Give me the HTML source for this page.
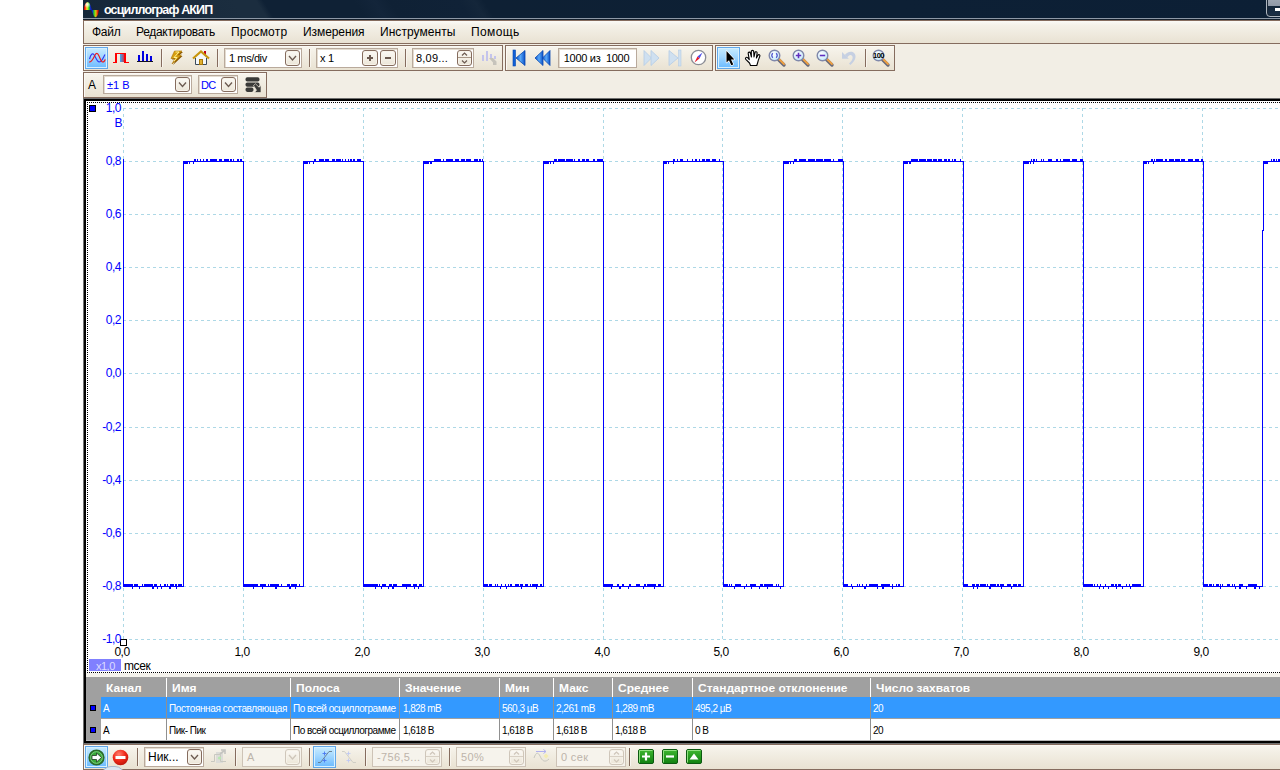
<!DOCTYPE html><html lang="ru"><head><meta charset="utf-8"><title>осциллограф АКИП</title><style>
*{box-sizing:border-box;margin:0;padding:0}
html,body{width:1280px;height:770px;overflow:hidden;background:#fff}
body{position:relative;font-family:"Liberation Sans","DejaVu Sans",sans-serif;font-size:11px;color:#000}
.a{position:absolute}
.tb{position:absolute;border:1px solid #856c5e;background:linear-gradient(#f8f5ee 0%,#f3efe5 30%,#e9e2d2 100%);box-shadow:inset 1px 1px 0 #fbf9f4}
.sep{position:absolute;width:1px;background:#856c5e;box-shadow:1px 0 0 #f8f5ee}
.fld{position:absolute;letter-spacing:-0.3px;background:#fff;border:1px solid #b9aa9c;box-shadow:inset 1px 1px 0 #e4dcd0;height:20px;line-height:18px;white-space:nowrap;overflow:hidden}
.fld.dis{background:#f6f3ec;border-color:#cdc3b6;color:#bdb4aa;box-shadow:none;font-size:11px !important;letter-spacing:0.35px}
.btn{position:absolute;border:1px solid #856c5e;border-radius:3px;background:linear-gradient(#fbf9f5,#ece6d8);box-shadow:inset 0 0 0 1px #f7f3ea}
.btn.dis{border-color:#cfc6ba}
.sel{position:absolute;border:1px solid #62a8ea;background:linear-gradient(#c8ecff 0%,#a2d7ff 45%,#6abaff 100%);box-shadow:inset 0 0 0 1px #d6f0ff}
.t{position:absolute;white-space:nowrap;line-height:1}
.yl{position:absolute;white-space:nowrap;line-height:1;font-size:12px;letter-spacing:-0.5px;color:#0000ff;text-align:right;width:40px}
.xl{position:absolute;white-space:nowrap;line-height:1;font-size:12px;letter-spacing:-0.5px;color:#000;text-align:center;width:40px}
.th{position:absolute;white-space:nowrap;line-height:1;font-size:10px;font-weight:bold;color:#fff;top:684px;transform:scaleX(1.2);transform-origin:0 0}
.td{position:absolute;white-space:nowrap;line-height:1;font-size:10px;letter-spacing:-0.45px}
svg{position:absolute;overflow:visible}
</style></head><body>
<div class="a" style="left:83px;top:20px;width:1197px;height:750px;background:#f2eee5"></div>
<div class="a" style="left:83px;top:0;width:1197px;height:20px;background:linear-gradient(58deg,#15273a 5px,#1b2d3f 138px,#1b2d3f 157px,#0f2135 163px,#0f2135 240px,#13253a 257px,#0f2135 270px,#102237 329px,#14263a 342px,#0e2034 350px,#0d2035 700px,#0c1f35 1025px)"></div>
<div class="a" style="left:83px;top:18px;width:1197px;height:1px;background:#8d98a6"></div>
<div class="a" style="left:83px;top:19px;width:1197px;height:1px;background:#16202c"></div>
<svg style="left:83px;top:0px" width="17" height="19" viewBox="0 0 17 19">
<defs><linearGradient id="rb" x1="0" x2="1" y1="0" y2="0"><stop offset="0" stop-color="#c00000"/><stop offset=".15" stop-color="#ff2010"/><stop offset=".38" stop-color="#fff020"/><stop offset=".62" stop-color="#20e020"/><stop offset=".78" stop-color="#1030c0"/><stop offset="1" stop-color="#0808a0"/></linearGradient>
<linearGradient id="rb2" x1="0" x2="1" y1="0" y2="0"><stop offset="0" stop-color="#0808b0"/><stop offset=".2" stop-color="#1030d0"/><stop offset=".35" stop-color="#20d020"/><stop offset=".6" stop-color="#e0c010"/><stop offset=".85" stop-color="#e01808"/><stop offset="1" stop-color="#900000"/></linearGradient>
<radialGradient id="wh" cx=".4" cy=".3" r=".45"><stop offset="0" stop-color="#fff" stop-opacity=".95"/><stop offset="1" stop-color="#fff" stop-opacity="0"/></radialGradient></defs>
<path d="M0.8 10 C1.5 0.5 6.5 0 7.8 6.5 L9.2 10 Z" fill="url(#rb)"/><path d="M0.8 10 C1.5 0.5 6.5 0 7.8 6.5 L9.2 10 Z" fill="url(#wh)"/><path d="M8.2 10 L15.9 10 C15.3 17.8 11.5 19.3 10 14 Z" fill="url(#rb2)"/></svg>
<div class="t" style="left:104px;top:4px;font-size:12.5px;font-weight:bold;color:#fff;letter-spacing:-0.85px">осциллограф АКИП</div>
<div class="a" style="left:1266px;top:-3px;width:30px;height:20px;border:1px solid #aeb6c0;border-radius:0 0 0 4px;background:linear-gradient(#a0a8b4 0%,#8f98a6 45%,#14263a 46%,#1c3048 100%);box-shadow:inset 0 0 0 1px #1a2838"></div>
<div class="a" style="left:1275px;top:8px;width:8px;height:3px;background:#fff"></div>
<div class="a" style="left:83px;top:20px;width:1200px;height:24px;border:1px solid #856c5e;background:linear-gradient(#fbfaf6 0%,#f4f1e8 20%,#e9e2d3 100%)"></div>
<div class="t mn" style="left:92px;top:26px;font-size:12px;letter-spacing:-0.28px">Файл</div>
<div class="t mn" style="left:136px;top:26px;font-size:12px;letter-spacing:-0.30px">Редактировать</div>
<div class="t mn" style="left:231px;top:26px;font-size:12px;letter-spacing:0.18px">Просмотр</div>
<div class="t mn" style="left:303px;top:26px;font-size:12px;letter-spacing:-0.08px">Измерения</div>
<div class="t mn" style="left:380px;top:26px;font-size:12px;letter-spacing:0.05px">Инструменты</div>
<div class="t mn" style="left:471px;top:26px;font-size:12px;letter-spacing:0.40px">Помощь</div>
<div class="tb" style="left:83px;top:45px;width:420px;height:26px"></div>
<div class="tb" style="left:505px;top:45px;width:208px;height:26px"></div>
<div class="tb" style="left:715px;top:45px;width:180px;height:26px"></div>
<div class="tb" style="left:83px;top:72px;width:184px;height:26px"></div>
<div class="sel" style="left:85px;top:47px;width:23px;height:22px"></div>
<svg style="left:88px;top:50px" width="18" height="16" viewBox="0 0 18 16"><path d="M1.5 9 C3 3.5 5 2.5 6.5 5.5 C8.5 9.5 10 13 12.5 11.5 C14.5 10.5 15.5 7 17 4.5" fill="none" stroke="#3038f0" stroke-width="1.15"/><path d="M1 12 C3.5 12.5 5 9 6.5 6 C8 2.5 9.5 2.5 11 6 C12.5 9.5 14 13.5 16 11.5 C16.7 10.8 17 10 17.2 9.3" fill="none" stroke="#f01818" stroke-width="1.15"/></svg>
<svg style="left:112px;top:50px" width="18" height="16" viewBox="0 0 18 16" shape-rendering="crispEdges"><defs><linearGradient id="pg" x1="0" x2="1"><stop offset="0" stop-color="#30b0f8"/><stop offset="1" stop-color="#e02030"/></linearGradient></defs><rect x="8" y="4" width="5" height="8" fill="url(#pg)"/><path d="M1 12.5 H4 V3.5 H13 V12.5 H17" fill="none" stroke="#ff0000" stroke-width="1.6"/></svg>
<svg style="left:136px;top:50px" width="18" height="16" viewBox="0 0 18 16" shape-rendering="crispEdges"><rect x="2" y="5" width="2" height="7" fill="#0000e0"/><rect x="6" y="1" width="2" height="11" fill="#0000e0"/><rect x="10" y="4" width="2" height="8" fill="#0000e0"/><rect x="14" y="6" width="2" height="6" fill="#0000e0"/><rect x="1" y="11" width="16" height="1" fill="#101020"/></svg>
<div class="sep" style="left:161px;top:49px;height:18px"></div>
<svg style="left:169px;top:50px" width="16" height="16" viewBox="0 0 16 16"><path d="M6.5 2 L14 2 L9.5 6 L13.5 6 L4 15 L7 9.5 L3 9.5 Z" fill="#8a5800"/><path d="M5.5 1 L13 1 L8.5 5 L12.5 5 L3 14 L6 8.5 L2 8.5 Z" fill="#d8a010" stroke="#a87000" stroke-width=".6"/><path d="M6.5 2 L10 2 L5 7.5 L8 7.5 L5 11" fill="none" stroke="#fff090" stroke-width="1"/></svg>
<svg style="left:192px;top:50px" width="18" height="16" viewBox="0 0 18 16"><rect x="12" y="1" width="2" height="4" fill="#c00018"/><path d="M3.5 8 L9 3 L14.5 8 L14.5 14.5 L3.5 14.5 Z" fill="#f4f8fa"/><path d="M3.5 8 V14.5 H14.5 V8" fill="none" stroke="#3a4a5c" stroke-width="1"/><path d="M1 8.5 L9 1.5 L17 8.5" fill="none" stroke="#c8960c" stroke-width="2.2"/><rect x="7.5" y="9.5" width="3" height="5" fill="#e0b030" stroke="#a87808" stroke-width="1"/></svg>
<div class="sep" style="left:217px;top:49px;height:18px"></div>
<div class="fld" style="left:224px;top:48px;width:78px;padding-left:4px;letter-spacing:-0.4px">1 ms/div</div>
<div class="btn" style="left:285px;top:50px;width:15px;height:16px"></div>
<svg style="left:285px;top:50px" width="15" height="16" viewBox="0 0 15 16"><path d="M4 6.0 L7.500 10.0 L11 6.0" fill="none" stroke="#6b5a50" stroke-width="1.3"/></svg>
<div class="sep" style="left:309px;top:49px;height:18px"></div>
<div class="fld" style="left:316px;top:48px;width:82px;padding-left:3px">x 1</div>
<div class="btn" style="left:362px;top:50px;width:16px;height:16px"></div>
<div class="btn" style="left:380px;top:50px;width:16px;height:16px"></div>
<svg style="left:362px;top:50px" width="16" height="16" shape-rendering="crispEdges"><rect x="5" y="7" width="6" height="2" fill="#6b5a50"/><rect x="7" y="5" width="2" height="6" fill="#6b5a50"/></svg>
<svg style="left:380px;top:50px" width="16" height="16" shape-rendering="crispEdges"><rect x="5" y="7" width="6" height="2" fill="#6b5a50"/></svg>
<div class="sep" style="left:405px;top:49px;height:18px"></div>
<div class="fld" style="left:412px;top:48px;width:62px;padding-left:3px;letter-spacing:0.2px">8,09...</div>
<div class="btn" style="left:457px;top:50px;width:15px;height:16px"></div>
<div class="a" style="left:458px;top:57px;width:13px;height:1px;background:#a89888"></div>
<svg style="left:457px;top:50px" width="15" height="16" viewBox="0 0 15 16"><path d="M5 5.500 L7.500 3 L10 5.500" fill="none" stroke="#6b5a50" stroke-width="1.2"/><path d="M5 10.500 L7.500 13 L10 10.500" fill="none" stroke="#6b5a50" stroke-width="1.2"/></svg>
<svg style="left:481px;top:50px" width="17" height="16" viewBox="0 0 17 16"><rect x="1" y="5" width="2" height="6" fill="#c4c4ec"/><rect x="5" y="1" width="2" height="10" fill="#c4c4ec"/><rect x="9" y="4" width="2" height="4" fill="#c4c4ec"/><rect x="13" y="6" width="2" height="3" fill="#c4c4ec"/><path d="M8 8 L12 8 L15.500 11.500 L15.500 15 L12 15 L12 12.500 Z" fill="#c6c3bb"/></svg>
<svg style="left:512px;top:49px" width="14" height="18" viewBox="0 0 14 18"><defs><linearGradient id="bg1" x1="0" x2="1"><stop offset="0" stop-color="#0a50c8"/><stop offset=".5" stop-color="#58a8f8"/><stop offset="1" stop-color="#0a50c8"/></linearGradient></defs><rect x="1" y="1" width="2.500" height="16" fill="#1060d8" stroke="#0848b0" stroke-width=".6"/><path d="M13 1.500 L13 16.500 L4 9 Z" fill="url(#bg1)" stroke="#0848b0" stroke-width=".8"/></svg>
<svg style="left:534px;top:49px" width="17" height="18" viewBox="0 0 17 18"><defs><linearGradient id="bg2" x1="0" x2="1"><stop offset="0" stop-color="#0a50c8"/><stop offset=".5" stop-color="#58a8f8"/><stop offset="1" stop-color="#0a50c8"/></linearGradient></defs><path d="M9 1.500 L9 16.500 L1 9 Z" fill="url(#bg2)" stroke="#0848b0" stroke-width=".8"/><path d="M16 1.500 L16 16.500 L8.500 9 Z" fill="url(#bg2)" stroke="#0848b0" stroke-width=".8"/></svg>
<div class="fld" style="left:558px;top:48px;width:79px;padding-right:2px;text-align:center">1000 из&nbsp; 1000</div>
<svg style="left:643px;top:49px" width="17" height="18" viewBox="0 0 17 18"><path d="M1 1.500 L1 16.500 L8.500 9 Z" fill="#cfe0f0" stroke="#b4cce4" stroke-width=".8"/><path d="M8 1.500 L8 16.500 L16 9 Z" fill="#cfe0f0" stroke="#b4cce4" stroke-width=".8"/></svg>
<svg style="left:668px;top:49px" width="14" height="18" viewBox="0 0 14 18"><path d="M1 1.500 L1 16.500 L10 9 Z" fill="#cfe0f0" stroke="#b4cce4" stroke-width=".8"/><rect x="10.500" y="1" width="2.500" height="16" fill="#cfe0f0" stroke="#b4cce4" stroke-width=".6"/></svg>
<svg style="left:690px;top:49px" width="17" height="17" viewBox="0 0 17 17"><circle cx="8.500" cy="8.500" r="7.200" fill="#fff" stroke="#8a8c94" stroke-width="1.300"/><path d="M12.500 3.500 L9.500 9.500 L7.500 7.500 Z" fill="#5050e8"/><path d="M4.500 13.500 L7.500 7.500 L9.500 9.500 Z" fill="#e81828"/></svg>
<svg width="0" height="0" style="left:0;top:0"><defs><radialGradient id="lens" cx=".4" cy=".35" r=".7"><stop offset="0" stop-color="#ffffff"/><stop offset="1" stop-color="#bfe8fb"/></radialGradient></defs></svg>
<div class="sel" style="left:717px;top:47px;width:23px;height:22px"></div>
<svg style="left:722px;top:49px" width="14" height="18" viewBox="0 0 14 18"><path d="M4.5 2 L4.5 13.5 L7 11.2 L9.3 16.3 L11.3 15.4 L9 10.6 L12.4 10.6 Z" fill="#000" stroke="#fff" stroke-width="1.4" paint-order="stroke" stroke-linejoin="round"/></svg>
<svg style="left:744px;top:49px" width="18" height="18" viewBox="0 0 18 18"><path d="M6.5 16.5 L5.5 14 L1.8 10.3 C0.8 9 2.3 7.6 3.6 8.7 L5.3 10.6 L4.2 4.6 C3.9 3 6 2.5 6.4 4.1 L7.4 8 L7.3 2.6 C7.3 1 9.6 1 9.7 2.6 L10 8 L11 3.6 C11.4 2.1 13.4 2.6 13.1 4.2 L12.4 9 L13.9 6.3 C14.7 5 16.4 5.9 15.8 7.3 L14.2 11.6 C13.8 13.5 13.3 14.8 12.8 16.5 Z" fill="#fff" stroke="#000" stroke-width="1.1" stroke-linejoin="round"/></svg>
<svg style="left:768px;top:49px" width="18" height="18" viewBox="0 0 18 18"><path d="M9.500 9.500 L16 16" stroke="#6a6a78" stroke-width="3.400" stroke-linecap="round"/><path d="M10 9 L16 15" stroke="#f0a040" stroke-width="1.800" stroke-linecap="round"/><circle cx="6.500" cy="6.500" r="5.300" fill="url(#lens)" stroke="#8088aa" stroke-width="1.400"/><path d="M4.800 4.200 C3.600 5.500 3.600 7.500 4.800 8.800 M8.200 4.200 C9.400 5.500 9.400 7.500 8.200 8.800" fill="none" stroke="#5058d0" stroke-width="1.200"/></svg>
<svg style="left:792px;top:49px" width="18" height="18" viewBox="0 0 18 18"><path d="M9.500 9.500 L16 16" stroke="#6a6a78" stroke-width="3.400" stroke-linecap="round"/><path d="M10 9 L16 15" stroke="#f0a040" stroke-width="1.800" stroke-linecap="round"/><circle cx="6.500" cy="6.500" r="5.300" fill="url(#lens)" stroke="#8088aa" stroke-width="1.400"/><path d="M3.800 6.500 H9.200 M6.500 3.800 V9.200" stroke="#6030c0" stroke-width="1.600"/></svg>
<svg style="left:816px;top:49px" width="18" height="18" viewBox="0 0 18 18"><path d="M9.500 9.500 L16 16" stroke="#6a6a78" stroke-width="3.400" stroke-linecap="round"/><path d="M10 9 L16 15" stroke="#f0a040" stroke-width="1.800" stroke-linecap="round"/><circle cx="6.500" cy="6.500" r="5.300" fill="url(#lens)" stroke="#8088aa" stroke-width="1.400"/><path d="M3.800 6.500 H9.200" stroke="#6030c0" stroke-width="1.600"/></svg>
<svg style="left:841px;top:49px" width="17" height="18" viewBox="0 0 17 18"><path d="M1 3 L1 9.8 L7.8 9.8 Z" fill="#c6d0e2"/><path d="M3.8 6 C6 3 10.5 1.5 13.3 4.3 C16.3 7.5 13.5 13 9.3 16 L8 14.6 C11 12 12.6 8.8 11 6.8 C9.6 5.2 7.6 6.2 6.2 8.4 Z" fill="#c6d0e2"/></svg>
<div class="sep" style="left:865px;top:49px;height:18px"></div>
<svg style="left:872px;top:49px" width="18" height="18" viewBox="0 0 18 18"><path d="M9.500 9.500 L16 16" stroke="#6a6a78" stroke-width="3.400" stroke-linecap="round"/><path d="M10 9 L16 15" stroke="#f0a040" stroke-width="1.800" stroke-linecap="round"/><circle cx="6.500" cy="6.500" r="5.300" fill="url(#lens)" stroke="#8088aa" stroke-width="1.400"/><text x="6.500" y="8.800" font-size="7.500" font-weight="bold" text-anchor="middle" fill="#000" font-family="Liberation Sans,sans-serif" letter-spacing="-0.5">100</text></svg>
<div class="t" style="left:88px;top:79px;font-size:12px">A</div>
<div class="fld" style="left:103px;top:75px;width:89px;height:19px;line-height:18px;padding-left:3px;color:#0000ff;font-size:11px;letter-spacing:0">±1 В</div>
<div class="btn" style="left:175px;top:77px;width:15px;height:15px"></div>
<svg style="left:175px;top:77px" width="15" height="16" viewBox="0 0 15 16"><path d="M4 5.5 L7.500 9.5 L11 5.5" fill="none" stroke="#6b5a50" stroke-width="1.3"/></svg>
<div class="fld" style="left:198px;top:75px;width:40px;height:19px;line-height:18px;padding-left:2px;color:#0000ff;font-size:11px;letter-spacing:-0.8px">DC</div>
<div class="btn" style="left:221px;top:77px;width:15px;height:15px"></div>
<svg style="left:221px;top:77px" width="15" height="16" viewBox="0 0 15 16"><path d="M4 5.5 L7.500 9.5 L11 5.5" fill="none" stroke="#6b5a50" stroke-width="1.3"/></svg>
<svg style="left:245px;top:77px" width="17" height="16" viewBox="0 0 17 16"><rect x="0.5" y="0.2" width="14" height="4.300" rx="1.800" fill="#3a3a38"/><rect x="0.5" y="5.400" width="14" height="4.300" rx="1.800" fill="#3a3a38"/><rect x="0.5" y="10.600" width="8" height="4.300" rx="1.800" fill="#3a3a38"/><path d="M8.500 8.500 L10.500 6.800 L14 10.200 L16 8.500 L16 15.500 L9.500 15.500 L11.500 13.200 Z" fill="#3a3a38" stroke="#ece6d8" stroke-width=".7"/></svg>
<div class="a" style="left:83px;top:98px;width:1200px;height:646px;background:#707070"></div>
<div class="a" style="left:84px;top:99px;width:1200px;height:644px;background:#000"></div>
<div class="a" style="left:86px;top:101px;width:1200px;height:572px;background:#fff"></div>
<div class="a" style="left:86px;top:673px;width:1200px;height:4px;background:#f4f2ec"></div>
<div class="a" style="left:86px;top:677px;width:1200px;height:64px;background:#a0a0a0"></div>
<div class="a" style="left:86px;top:740px;width:1200px;height:1px;background:#b8b8b8"></div>
<svg style="left:0;top:0" width="1280" height="770" viewBox="0 0 1280 770" shape-rendering="crispEdges"><path d="M87 102.500 H1280" stroke="#000" stroke-width="1" stroke-dasharray="1 1" fill="none"/><path d="M87 672.500 H1280" stroke="#000" stroke-width="1" stroke-dasharray="1 1" fill="none"/><path d="M87.500 102 V673" stroke="#000" stroke-width="1" stroke-dasharray="1 1" fill="none"/><path d="M123 108.5 H1280" stroke="#add8e6" stroke-width="1" stroke-dasharray="3 3" fill="none"/><path d="M123 161.5 H1280" stroke="#add8e6" stroke-width="1" stroke-dasharray="3 3" fill="none"/><path d="M123 214.5 H1280" stroke="#add8e6" stroke-width="1" stroke-dasharray="3 3" fill="none"/><path d="M123 267.5 H1280" stroke="#add8e6" stroke-width="1" stroke-dasharray="3 3" fill="none"/><path d="M123 320.5 H1280" stroke="#add8e6" stroke-width="1" stroke-dasharray="3 3" fill="none"/><path d="M123 373.5 H1280" stroke="#add8e6" stroke-width="1" stroke-dasharray="3 3" fill="none"/><path d="M123 427.5 H1280" stroke="#add8e6" stroke-width="1" stroke-dasharray="3 3" fill="none"/><path d="M123 480.5 H1280" stroke="#add8e6" stroke-width="1" stroke-dasharray="3 3" fill="none"/><path d="M123 533.5 H1280" stroke="#add8e6" stroke-width="1" stroke-dasharray="3 3" fill="none"/><path d="M123 586.5 H1280" stroke="#add8e6" stroke-width="1" stroke-dasharray="3 3" fill="none"/><path d="M123 639.5 H1280" stroke="#add8e6" stroke-width="1" stroke-dasharray="3 3" fill="none"/><path d="M123.5 108 V640" stroke="#add8e6" stroke-width="1" stroke-dasharray="3 3" fill="none"/><path d="M243.5 108 V640" stroke="#add8e6" stroke-width="1" stroke-dasharray="3 3" fill="none"/><path d="M363.5 108 V640" stroke="#add8e6" stroke-width="1" stroke-dasharray="3 3" fill="none"/><path d="M483.5 108 V640" stroke="#add8e6" stroke-width="1" stroke-dasharray="3 3" fill="none"/><path d="M603.5 108 V640" stroke="#add8e6" stroke-width="1" stroke-dasharray="3 3" fill="none"/><path d="M722.5 108 V640" stroke="#add8e6" stroke-width="1" stroke-dasharray="3 3" fill="none"/><path d="M842.5 108 V640" stroke="#add8e6" stroke-width="1" stroke-dasharray="3 3" fill="none"/><path d="M962.5 108 V640" stroke="#add8e6" stroke-width="1" stroke-dasharray="3 3" fill="none"/><path d="M1082.5 108 V640" stroke="#add8e6" stroke-width="1" stroke-dasharray="3 3" fill="none"/><path d="M1202.5 108 V640" stroke="#add8e6" stroke-width="1" stroke-dasharray="3 3" fill="none"/><path d="M123 161h1v426h-1zM183 161h1v426h-1zM243 161h1v426h-1zM303 161h1v426h-1zM363 161h1v426h-1zM423 161h1v426h-1zM483 161h1v426h-1zM543 161h1v426h-1zM603 161h1v426h-1zM663 161h1v426h-1zM723 161h1v426h-1zM783 161h1v426h-1zM843 161h1v426h-1zM903 161h1v426h-1zM963 161h1v426h-1zM1023 161h1v426h-1zM1083 161h1v426h-1zM1143 161h1v426h-1zM1203 161h1v426h-1zM1263 161h1v70h-1zM1262 230h1v357h-1zM123 586h61v1h-61zM124 584h9v2h-9zM134 584h4v2h-4zM142 584h1v2h-1zM144 584h9v2h-9zM154 584h3v2h-3zM160 584h1v2h-1zM164 584h2v2h-2zM167 584h1v2h-1zM170 584h4v2h-4zM175 584h2v2h-2zM178 584h4v2h-4zM132 587h1v2h-1zM139 587h1v2h-1zM152 587h2v2h-2zM157 587h1v2h-1zM161 587h1v2h-1zM169 587h2v2h-2zM176 587h1v2h-1zM183 161h61v1h-61zM184 162h4v2h-4zM189 162h1v2h-1zM193 162h1v2h-1zM194 159h2v2h-2zM197 159h1v2h-1zM200 159h1v2h-1zM203 159h1v2h-1zM206 159h2v2h-2zM210 159h7v2h-7zM219 159h3v2h-3zM224 159h5v2h-5zM230 159h2v2h-2zM233 159h1v2h-1zM237 159h2v2h-2zM240 159h2v2h-2zM243 586h61v1h-61zM244 584h14v2h-14zM260 584h6v2h-6zM268 584h1v2h-1zM270 584h9v2h-9zM281 584h1v2h-1zM287 584h3v2h-3zM291 584h6v2h-6zM299 584h1v2h-1zM253 587h1v2h-1zM262 587h1v2h-1zM275 587h2v2h-2zM289 587h2v2h-2zM295 587h1v2h-1zM303 161h61v1h-61zM304 162h4v2h-4zM309 162h1v2h-1zM313 162h1v2h-1zM314 159h2v2h-2zM319 159h5v2h-5zM325 159h4v2h-4zM332 159h3v2h-3zM336 159h5v2h-5zM342 159h1v2h-1zM345 159h1v2h-1zM348 159h1v2h-1zM350 159h2v2h-2zM353 159h2v2h-2zM357 159h4v2h-4zM363 586h61v1h-61zM364 584h14v2h-14zM379 584h1v2h-1zM382 584h4v2h-4zM389 584h3v2h-3zM393 584h4v2h-4zM402 584h9v2h-9zM413 584h4v2h-4zM419 584h3v2h-3zM375 587h1v2h-1zM381 587h1v2h-1zM388 587h1v2h-1zM392 587h2v2h-2zM406 587h1v2h-1zM414 587h1v2h-1zM418 587h1v2h-1zM423 161h61v1h-61zM424 162h5v2h-5zM430 162h2v2h-2zM434 159h7v2h-7zM443 159h1v2h-1zM446 159h7v2h-7zM455 159h4v2h-4zM461 159h4v2h-4zM466 159h5v2h-5zM474 159h4v2h-4zM479 159h2v2h-2zM482 159h1v2h-1zM483 586h61v1h-61zM484 584h4v2h-4zM489 584h3v2h-3zM495 584h1v2h-1zM497 584h1v2h-1zM501 584h1v2h-1zM505 584h1v2h-1zM508 584h1v2h-1zM510 584h2v2h-2zM515 584h4v2h-4zM520 584h3v2h-3zM525 584h3v2h-3zM530 584h1v2h-1zM532 584h6v2h-6zM540 584h2v2h-2zM500 587h1v2h-1zM506 587h1v2h-1zM521 587h1v2h-1zM536 587h1v2h-1zM543 161h61v1h-61zM544 162h5v2h-5zM550 162h1v2h-1zM553 162h1v2h-1zM554 159h3v2h-3zM558 159h7v2h-7zM566 159h7v2h-7zM574 159h1v2h-1zM578 159h2v2h-2zM582 159h3v2h-3zM586 159h3v2h-3zM593 159h2v2h-2zM597 159h6v2h-6zM603 586h61v1h-61zM604 584h9v2h-9zM617 584h2v2h-2zM622 584h2v2h-2zM629 584h2v2h-2zM636 584h4v2h-4zM644 584h2v2h-2zM647 584h9v2h-9zM658 584h3v2h-3zM611 587h1v2h-1zM619 587h2v2h-2zM628 587h1v2h-1zM643 587h1v2h-1zM654 587h1v2h-1zM663 161h61v1h-61zM664 162h3v2h-3zM668 162h1v2h-1zM673 162h1v2h-1zM673 159h2v2h-2zM677 159h1v2h-1zM680 159h3v2h-3zM687 159h1v2h-1zM692 159h1v2h-1zM695 159h2v2h-2zM699 159h1v2h-1zM702 159h3v2h-3zM706 159h4v2h-4zM712 159h4v2h-4zM719 159h1v2h-1zM723 586h61v1h-61zM724 584h4v2h-4zM729 584h1v2h-1zM731 584h1v2h-1zM735 584h6v2h-6zM746 584h1v2h-1zM750 584h6v2h-6zM760 584h3v2h-3zM764 584h9v2h-9zM776 584h1v2h-1zM778 584h1v2h-1zM734 587h1v2h-1zM744 587h1v2h-1zM751 587h1v2h-1zM759 587h1v2h-1zM767 587h1v2h-1zM780 587h1v2h-1zM783 161h61v1h-61zM784 162h5v2h-5zM790 162h1v2h-1zM793 162h1v2h-1zM794 159h3v2h-3zM799 159h7v2h-7zM808 159h7v2h-7zM816 159h7v2h-7zM824 159h7v2h-7zM833 159h1v2h-1zM838 159h5v2h-5zM843 586h61v1h-61zM844 584h4v2h-4zM851 584h1v2h-1zM857 584h1v2h-1zM859 584h1v2h-1zM862 584h1v2h-1zM866 584h1v2h-1zM869 584h9v2h-9zM881 584h9v2h-9zM892 584h1v2h-1zM896 584h1v2h-1zM898 584h2v2h-2zM852 587h1v2h-1zM864 587h2v2h-2zM877 587h1v2h-1zM882 587h2v2h-2zM892 587h1v2h-1zM903 161h61v1h-61zM904 162h4v2h-4zM909 162h2v2h-2zM911 159h7v2h-7zM919 159h7v2h-7zM927 159h5v2h-5zM933 159h4v2h-4zM938 159h4v2h-4zM944 159h3v2h-3zM948 159h2v2h-2zM952 159h1v2h-1zM954 159h2v2h-2zM960 159h1v2h-1zM963 586h61v1h-61zM964 584h4v2h-4zM972 584h3v2h-3zM976 584h3v2h-3zM980 584h6v2h-6zM987 584h1v2h-1zM990 584h6v2h-6zM997 584h2v2h-2zM1000 584h4v2h-4zM1007 584h4v2h-4zM1013 584h4v2h-4zM1018 584h3v2h-3zM973 587h1v2h-1zM977 587h1v2h-1zM989 587h2v2h-2zM1001 587h1v2h-1zM1011 587h1v2h-1zM1023 161h61v1h-61zM1024 162h5v2h-5zM1030 162h1v2h-1zM1033 162h1v2h-1zM1031 159h1v2h-1zM1033 159h2v2h-2zM1036 159h1v2h-1zM1041 159h1v2h-1zM1043 159h1v2h-1zM1048 159h4v2h-4zM1056 159h2v2h-2zM1060 159h1v2h-1zM1063 159h7v2h-7zM1072 159h5v2h-5zM1080 159h3v2h-3zM1083 586h61v1h-61zM1084 584h9v2h-9zM1094 584h1v2h-1zM1097 584h1v2h-1zM1100 584h1v2h-1zM1105 584h1v2h-1zM1111 584h3v2h-3zM1115 584h2v2h-2zM1118 584h3v2h-3zM1126 584h1v2h-1zM1129 584h1v2h-1zM1132 584h9v2h-9zM1099 587h1v2h-1zM1103 587h1v2h-1zM1108 587h1v2h-1zM1116 587h1v2h-1zM1122 587h1v2h-1zM1130 587h1v2h-1zM1143 161h61v1h-61zM1144 162h3v2h-3zM1148 162h1v2h-1zM1153 162h1v2h-1zM1151 159h2v2h-2zM1154 159h1v2h-1zM1156 159h7v2h-7zM1165 159h2v2h-2zM1169 159h5v2h-5zM1175 159h5v2h-5zM1181 159h4v2h-4zM1188 159h5v2h-5zM1195 159h4v2h-4zM1201 159h2v2h-2zM1203 586h60v1h-60zM1204 584h4v2h-4zM1209 584h3v2h-3zM1213 584h1v2h-1zM1216 584h3v2h-3zM1220 584h1v2h-1zM1222 584h1v2h-1zM1227 584h3v2h-3zM1232 584h1v2h-1zM1234 584h1v2h-1zM1239 584h4v2h-4zM1248 584h9v2h-9zM1220 587h1v2h-1zM1235 587h1v2h-1zM1239 587h2v2h-2zM1246 587h1v2h-1zM1254 587h2v2h-2zM1259 587h1v2h-1zM1263 161h18v1h-18zM1264 162h4v2h-4zM1271 159h1v2h-1zM1273 159h2v2h-2zM1276 159h1v2h-1zM1278 159h2v2h-2zM123 159h1v2h-1z" fill="#0000ff"/><rect x="89.500" y="105.500" width="6" height="6" fill="#0000ff" stroke="#000" stroke-width="1"/><rect x="120.500" y="639.500" width="6" height="6" fill="#fff" stroke="#000" stroke-width="1"/></svg>
<div class="yl" style="left:81px;top:102px">1,0</div>
<div class="yl" style="left:81px;top:155px">0,8</div>
<div class="yl" style="left:81px;top:208px">0,6</div>
<div class="yl" style="left:81px;top:261px">0,4</div>
<div class="yl" style="left:81px;top:314px">0,2</div>
<div class="yl" style="left:81px;top:367px">0,0</div>
<div class="yl" style="left:81px;top:421px">-0,2</div>
<div class="yl" style="left:81px;top:474px">-0,4</div>
<div class="yl" style="left:81px;top:527px">-0,6</div>
<div class="yl" style="left:81px;top:580px">-0,8</div>
<div class="yl" style="left:81px;top:633px">-1,0</div>
<div class="yl" style="left:82px;top:117px">В</div>
<div class="xl" style="left:102px;top:646px">0,0</div>
<div class="xl" style="left:222px;top:646px">1,0</div>
<div class="xl" style="left:342px;top:646px">2,0</div>
<div class="xl" style="left:462px;top:646px">3,0</div>
<div class="xl" style="left:582px;top:646px">4,0</div>
<div class="xl" style="left:701px;top:646px">5,0</div>
<div class="xl" style="left:821px;top:646px">6,0</div>
<div class="xl" style="left:941px;top:646px">7,0</div>
<div class="xl" style="left:1061px;top:646px">8,0</div>
<div class="xl" style="left:1181px;top:646px">9,0</div>
<div class="a" style="left:89px;top:659px;width:32px;height:12px;background:#8080ff"></div>
<div class="t" style="left:96px;top:661px;font-size:11px;color:#dcdcff;letter-spacing:-0.5px">x1,0</div>
<div class="t" style="left:124px;top:660px;font-size:12px;letter-spacing:-0.4px">mсек</div>
<div class="a" style="left:101px;top:697px;width:1200px;height:21px;background:#3399ff"></div>
<div class="a" style="left:101px;top:719px;width:1200px;height:21px;background:#fff"></div>
<div class="a" style="left:166px;top:678px;width:1px;height:19px;background:#fff"></div>
<div class="a" style="left:166px;top:697px;width:1px;height:43px;background:#909090"></div>
<div class="a" style="left:290px;top:678px;width:1px;height:19px;background:#fff"></div>
<div class="a" style="left:290px;top:697px;width:1px;height:43px;background:#909090"></div>
<div class="a" style="left:399px;top:678px;width:1px;height:19px;background:#fff"></div>
<div class="a" style="left:399px;top:697px;width:1px;height:43px;background:#909090"></div>
<div class="a" style="left:499px;top:678px;width:1px;height:19px;background:#fff"></div>
<div class="a" style="left:499px;top:697px;width:1px;height:43px;background:#909090"></div>
<div class="a" style="left:553px;top:678px;width:1px;height:19px;background:#fff"></div>
<div class="a" style="left:553px;top:697px;width:1px;height:43px;background:#909090"></div>
<div class="a" style="left:612px;top:678px;width:1px;height:19px;background:#fff"></div>
<div class="a" style="left:612px;top:697px;width:1px;height:43px;background:#909090"></div>
<div class="a" style="left:692px;top:678px;width:1px;height:19px;background:#fff"></div>
<div class="a" style="left:692px;top:697px;width:1px;height:43px;background:#909090"></div>
<div class="a" style="left:870px;top:678px;width:1px;height:19px;background:#fff"></div>
<div class="a" style="left:870px;top:697px;width:1px;height:43px;background:#909090"></div>
<div class="th" style="left:106px">Канал</div>
<div class="th" style="left:172px">Имя</div>
<div class="th" style="left:296px">Полоса</div>
<div class="th" style="left:405px">Значение</div>
<div class="th" style="left:505px">Мин</div>
<div class="th" style="left:559px">Макс</div>
<div class="th" style="left:618px">Среднее</div>
<div class="th" style="left:698px">Стандартное отклонение</div>
<div class="th" style="left:876px">Число захватов</div>
<div class="td" style="left:103px;top:704px;color:#fff;letter-spacing:-0.50px">A</div>
<div class="td" style="left:169px;top:704px;color:#fff;letter-spacing:-0.38px">Постоянная составляющая</div>
<div class="td" style="left:293px;top:704px;color:#fff;letter-spacing:-0.50px">По всей осциллограмме</div>
<div class="td" style="left:403px;top:704px;color:#fff;letter-spacing:-0.60px">1,828 mВ</div>
<div class="td" style="left:502px;top:704px;color:#fff;letter-spacing:-0.50px">560,3 µВ</div>
<div class="td" style="left:556px;top:704px;color:#fff;letter-spacing:-0.50px">2,261 mВ</div>
<div class="td" style="left:615px;top:704px;color:#fff;letter-spacing:-0.50px">1,289 mВ</div>
<div class="td" style="left:695px;top:704px;color:#fff;letter-spacing:-0.50px">495,2 µВ</div>
<div class="td" style="left:873px;top:704px;color:#fff;letter-spacing:-0.50px">20</div>
<div class="td" style="left:103px;top:726px;color:#000;letter-spacing:-0.50px">A</div>
<div class="td" style="left:169px;top:726px;color:#000;letter-spacing:-0.50px">Пик- Пик</div>
<div class="td" style="left:293px;top:726px;color:#000;letter-spacing:-0.50px">По всей осциллограмме</div>
<div class="td" style="left:403px;top:726px;color:#000;letter-spacing:-0.50px">1,618 В</div>
<div class="td" style="left:502px;top:726px;color:#000;letter-spacing:-0.50px">1,618 В</div>
<div class="td" style="left:556px;top:726px;color:#000;letter-spacing:-0.50px">1,618 В</div>
<div class="td" style="left:615px;top:726px;color:#000;letter-spacing:-0.50px">1,618 В</div>
<div class="td" style="left:695px;top:726px;color:#000;letter-spacing:-0.50px">0 В</div>
<div class="td" style="left:873px;top:726px;color:#000;letter-spacing:-0.50px">20</div>
<div class="a" style="left:90px;top:705px;width:6px;height:6px;background:#0000ff;border:1px solid #000"></div>
<div class="a" style="left:90px;top:727px;width:6px;height:6px;background:#0000ff;border:1px solid #000"></div>
<div class="tb" style="left:83px;top:744px;width:1200px;height:26px"></div>
<div class="sel" style="left:85px;top:746px;width:23px;height:22px"></div>
<svg style="left:88px;top:749px" width="17" height="17" viewBox="0 0 17 17"><circle cx="8.500" cy="8.500" r="7.300" fill="#38a838" stroke="#2a6a2a" stroke-width="1.600"/><circle cx="8.500" cy="8.500" r="5.800" fill="none" stroke="#8ad08a" stroke-width=".8"/><path d="M4 6.500 H8.500 V4 L13.500 8.500 L8.500 13 V10.500 H4 Z" fill="#fff" stroke="#203820" stroke-width=".8"/></svg>
<svg style="left:112px;top:749px" width="17" height="17" viewBox="0 0 17 17"><defs><radialGradient id="rg" cx=".4" cy=".3" r=".8"><stop offset="0" stop-color="#ff8070"/><stop offset=".5" stop-color="#f02818"/><stop offset="1" stop-color="#b01008"/></radialGradient></defs><circle cx="8.500" cy="8.500" r="7.800" fill="url(#rg)"/><rect x="3.500" y="7" width="10" height="3" fill="#fff"/></svg>
<div class="sep" style="left:137px;top:748px;height:18px"></div>
<div class="fld" style="left:144px;top:747px;width:60px;padding-left:3px;font-size:12px;letter-spacing:0">Ник...</div>
<div class="btn" style="left:187px;top:749px;width:15px;height:16px"></div>
<svg style="left:187px;top:749px" width="15" height="16" viewBox="0 0 15 16"><path d="M4 6.0 L7.500 10.0 L11 6.0" fill="none" stroke="#6b5a50" stroke-width="1.3"/></svg>
<svg style="left:210px;top:749px" width="18" height="17" viewBox="0 0 18 17"><rect x="6" y="3" width="7" height="11" fill="#dcdcd8"/><path d="M1 12.500 H4.500 V5.500 H10.500 V12.500 H16" fill="none" stroke="#c8c8c0" stroke-width="1"/><circle cx="9.500" cy="9" r="1.600" fill="#b8e8b0"/><path d="M10 5 L14.500 1.500 M11 1 H15 V5" stroke="#c4c4c0" stroke-width="1.600" fill="none"/></svg>
<div class="sep" style="left:235px;top:748px;height:18px"></div>
<div class="fld dis" style="left:242px;top:747px;width:60px;padding-left:4px;font-size:12px">A</div>
<div class="btn dis" style="left:285px;top:749px;width:15px;height:16px"></div>
<svg style="left:285px;top:749px" width="15" height="16" viewBox="0 0 15 16"><path d="M4 6.0 L7.500 10.0 L11 6.0" fill="none" stroke="#cfc6ba" stroke-width="1.3"/></svg>
<div class="sep" style="left:309px;top:748px;height:18px"></div>
<div class="sel" style="left:313px;top:746px;width:23px;height:22px"></div>
<svg style="left:317px;top:749px" width="16" height="16" viewBox="0 0 16 16"><path d="M1 13.500 H3.500 L12 2.500 H15" fill="none" stroke="#5c6c7c" stroke-width=".8"/><path d="M7.500 2.500 V6.500 M5.500 4.500 H9.500 M7.500 9.500 V13.500 M5.500 11.500 H9.500" stroke="#4a78f0" stroke-width=".9"/></svg>
<svg style="left:341px;top:749px" width="16" height="16" viewBox="0 0 16 16"><path d="M1 2.500 H3.500 L12 13.500 H15" fill="none" stroke="#c8c8c0" stroke-width=".8"/><path d="M7.500 2.500 V6.500 M5.500 4.500 H9.500 M7.500 9.500 V13.500 M5.500 11.500 H9.500" stroke="#c0c8f4" stroke-width=".9"/></svg>
<div class="sep" style="left:365px;top:748px;height:18px"></div>
<div class="fld dis" style="left:372px;top:747px;width:70px;padding-left:4px;font-size:12px">-756,5...</div>
<div class="btn dis" style="left:425px;top:749px;width:15px;height:16px"></div>
<div class="a" style="left:426px;top:756px;width:13px;height:1px;background:#d8d0c4"></div>
<svg style="left:425px;top:749px" width="15" height="16" viewBox="0 0 15 16"><path d="M5 5.500 L7.500 3 L10 5.500" fill="none" stroke="#cfc6ba" stroke-width="1.2"/><path d="M5 10.500 L7.500 13 L10 10.500" fill="none" stroke="#cfc6ba" stroke-width="1.2"/></svg>
<div class="sep" style="left:449px;top:748px;height:18px"></div>
<div class="fld dis" style="left:456px;top:747px;width:70px;padding-left:4px;font-size:12px">50%</div>
<div class="btn dis" style="left:509px;top:749px;width:15px;height:16px"></div>
<div class="a" style="left:510px;top:756px;width:13px;height:1px;background:#d8d0c4"></div>
<svg style="left:509px;top:749px" width="15" height="16" viewBox="0 0 15 16"><path d="M5 5.500 L7.500 3 L10 5.500" fill="none" stroke="#cfc6ba" stroke-width="1.2"/><path d="M5 10.500 L7.500 13 L10 10.500" fill="none" stroke="#cfc6ba" stroke-width="1.2"/></svg>
<svg style="left:533px;top:749px" width="17" height="16" viewBox="0 0 17 16"><path d="M1 9 C3 3 5 3 7 7 C9 12 12 14 16 10" fill="none" stroke="#c8c8c0" stroke-width="1"/><path d="M3 2.500 H13 M10.500 0.500 L13 2.500 L10.500 4.500" fill="none" stroke="#b0b0f0" stroke-width="1"/><path d="M13 4.500 L15.500 7 L13 9.500 L10.500 7 Z" fill="#f4ecb0"/></svg>
<div class="fld dis" style="left:556px;top:747px;width:70px;padding-left:4px;font-size:12px">0 сек</div>
<div class="btn dis" style="left:609px;top:749px;width:15px;height:16px"></div>
<div class="a" style="left:610px;top:756px;width:13px;height:1px;background:#d8d0c4"></div>
<svg style="left:609px;top:749px" width="15" height="16" viewBox="0 0 15 16"><path d="M5 5.500 L7.500 3 L10 5.500" fill="none" stroke="#cfc6ba" stroke-width="1.2"/><path d="M5 10.500 L7.500 13 L10 10.500" fill="none" stroke="#cfc6ba" stroke-width="1.2"/></svg>
<div class="sep" style="left:629px;top:748px;height:18px"></div>
<svg style="left:638px;top:749px" width="16" height="15" viewBox="0 0 16 15"><defs><linearGradient id="gg638" x1="0" y1="0" x2="0" y2="1"><stop offset="0" stop-color="#40b830"/><stop offset="1" stop-color="#108010"/></linearGradient></defs><rect x=".5" y=".5" width="15" height="14" rx="1.500" fill="url(#gg638)" stroke="#0c5a10"/><path d="M1.500 13.500 V1.500 H14.500" fill="none" stroke="#90e080" stroke-width="1"/><path d="M4 7.500 H12 M8 3.500 V11.500" stroke="#fff" stroke-width="2.200"/></svg>
<svg style="left:662px;top:749px" width="16" height="15" viewBox="0 0 16 15"><defs><linearGradient id="gg662" x1="0" y1="0" x2="0" y2="1"><stop offset="0" stop-color="#40b830"/><stop offset="1" stop-color="#108010"/></linearGradient></defs><rect x=".5" y=".5" width="15" height="14" rx="1.500" fill="url(#gg662)" stroke="#0c5a10"/><path d="M1.500 13.500 V1.500 H14.500" fill="none" stroke="#90e080" stroke-width="1"/><path d="M4 7.500 H12" stroke="#fff" stroke-width="2.200"/></svg>
<svg style="left:686px;top:749px" width="16" height="15" viewBox="0 0 16 15"><defs><linearGradient id="gg686" x1="0" y1="0" x2="0" y2="1"><stop offset="0" stop-color="#40b830"/><stop offset="1" stop-color="#108010"/></linearGradient></defs><rect x=".5" y=".5" width="15" height="14" rx="1.500" fill="url(#gg686)" stroke="#0c5a10"/><path d="M1.500 13.500 V1.500 H14.500" fill="none" stroke="#90e080" stroke-width="1"/><path d="M3.500 10.500 L8 4.500 L12.500 10.500 Z" fill="#fff"/></svg>
<div class="a" style="left:101px;top:766px;width:24px;height:20px;border-radius:12px;background:#dbe6f2;border:1px solid #a8b8cc"></div>
</body></html>
